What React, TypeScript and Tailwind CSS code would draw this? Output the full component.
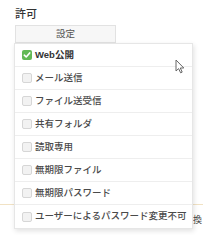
import React from "react";

const items = [
  { label: "Web公開", checked: true },
  { label: "メール送信", checked: false },
  { label: "ファイル送受信", checked: false },
  { label: "共有フォルダ", checked: false },
  { label: "読取専用", checked: false },
  { label: "無期限ファイル", checked: false },
  { label: "無期限パスワード", checked: false },
  { label: "ユーザーによるパスワード変更不可", checked: false },
];

function Box({ checked }: { checked: boolean }) {
  if (checked) {
    return (
      <span className="flex h-[10px] w-[10px] shrink-0 items-center justify-center rounded-[2px] bg-[#62b955]">
        <svg width="8" height="8" viewBox="0 0 8 8">
          <path d="M1.3 4.2 L3.2 6 L6.7 1.9" fill="none" stroke="#fff" strokeWidth="1.6" strokeLinecap="round" strokeLinejoin="round" />
        </svg>
      </span>
    );
  }
  return <span className="h-[10px] w-[10px] shrink-0 rounded-[2px] border border-[#d6d6d6] bg-[#f2f2f2]" />;
}

export default function App() {
  return (
    <div
      className="relative h-[235px] w-[203px] overflow-hidden bg-white px-[15px] pt-[7px]"
      style={{ fontFamily: "'Liberation Sans', 'Noto Sans CJK JP', sans-serif" }}
    >
      <div className="text-[11px] leading-[14px] font-medium text-[#333]">許可</div>
      <div className="mt-[4px] flex h-[18px] w-[101px] items-center justify-center border border-[#e2e2e2] bg-[#f7f7f7] text-[9.5px] text-[#555]">
        設定
      </div>
      <div className="-mx-[15px] mt-[161px] border-t border-[#f1e2c4]" />
      <div className="-mr-[15px] mt-[10px] pl-[178px] text-[9px] leading-[10px] whitespace-nowrap text-[#444]">
        換
      </div>

      <div className="absolute left-[14px] top-[43px] w-[179px] border border-[#e6e6e6] bg-white shadow-[1px_2px_5px_rgba(0,0,0,0.12)]">
        {items.map((it, i) => (
          <div
            key={it.label}
            className={`flex h-[23px] items-center gap-[3px] pl-[7px] text-[9.5px] whitespace-nowrap ${
              i < items.length - 1 ? "border-b border-[#eeeeee]" : ""
            } ${it.checked ? "font-semibold text-[#333]" : "font-medium text-[#4a4a4a]"}`}
          >
            <Box checked={it.checked} />
            <span>{it.label}</span>
          </div>
        ))}
      </div>

      <svg className="absolute left-[175px] top-[59px]" width="10" height="15" viewBox="0 0 10 15">
        <path d="M1 1 L1 12 L3.6 9.6 L5.6 13.8 L7.2 13.1 L5.3 9 L8.8 9 Z" fill="#fff" stroke="#666" strokeWidth="1" strokeLinejoin="round" />
      </svg>
    </div>
  );
}
